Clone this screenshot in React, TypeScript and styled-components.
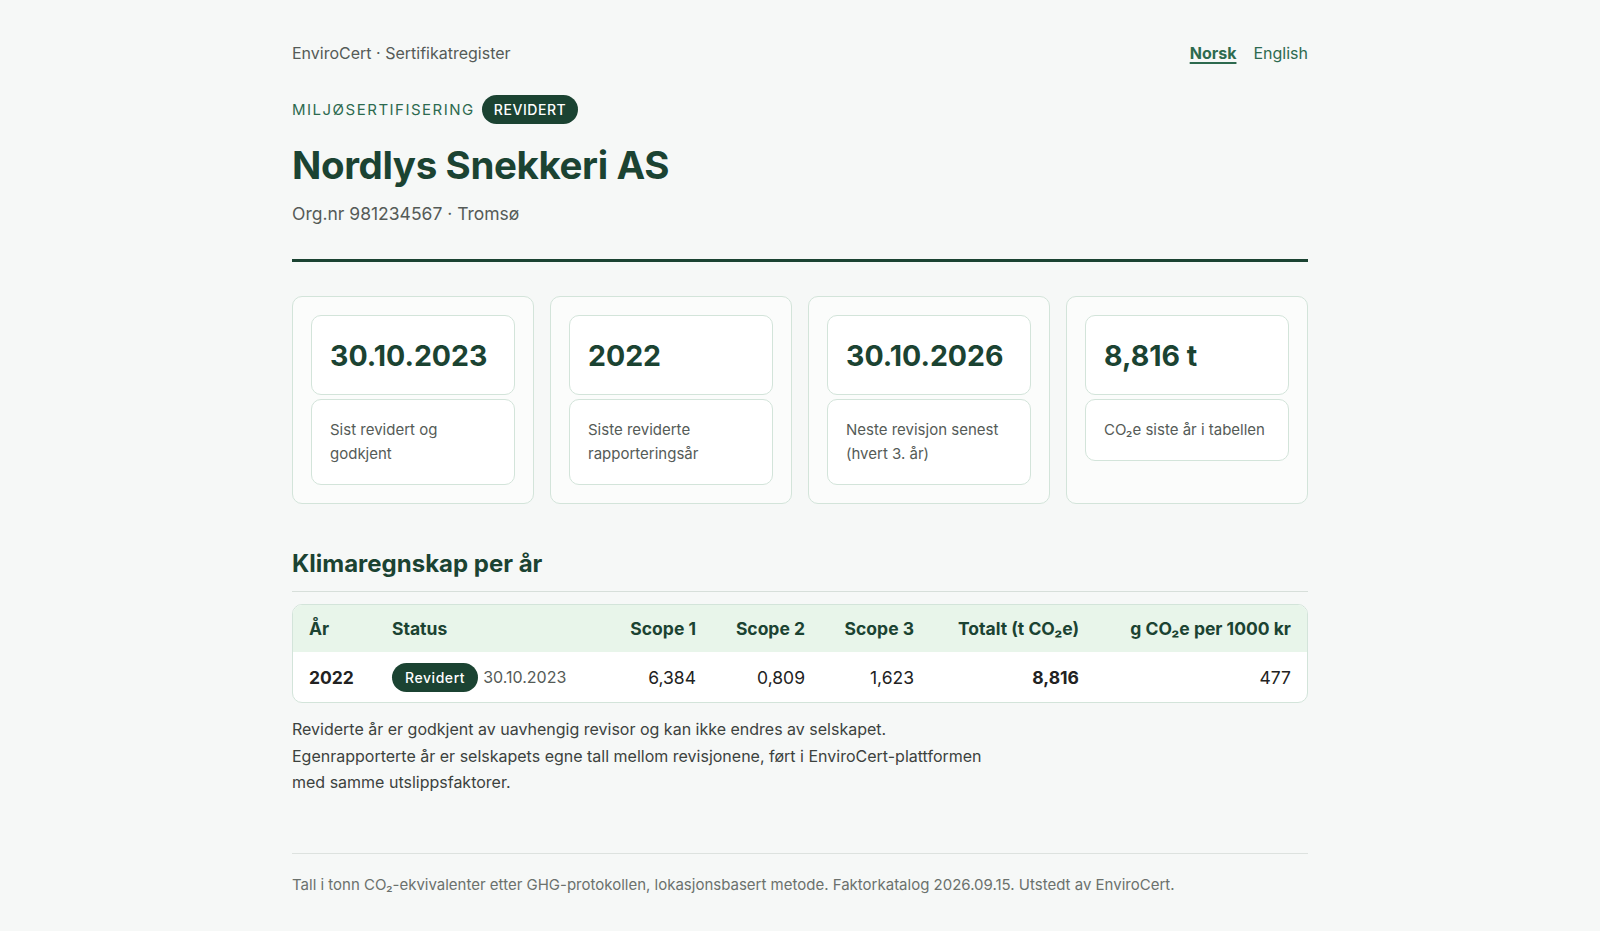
import { createGlobalStyle } from 'styled-components';
import styled from 'styled-components';

const GlobalStyle = createGlobalStyle`
  html, body {
    margin: 0;
    padding: 0;
    background: #f6f8f7;
  }
  body {
    font-family: Inter, "Noto Sans", "Liberation Sans", sans-serif;
    color: #1f2a24;
  }
`;

const Page = styled.div`
  max-width: 1016px;
  margin: 0 auto;
  padding: 40px 0 40px;
`;

const TopBar = styled.div`
  display: flex;
  justify-content: space-between;
  align-items: center;
  height: 26px;
`;

const Brand = styled.span`
  font-size: 16px;
  color: #555b57;
`;

const LangSwitch = styled.div`
  display: flex;
  gap: 17px;
`;

const LangLink = styled.a<{ $active?: boolean }>`
  font-size: 16px;
  color: #2d6a4f;
  font-weight: ${(p) => (p.$active ? 700 : 400)};
  text-decoration: ${(p) => (p.$active ? 'underline' : 'none')};
  text-underline-offset: 3px;
  text-decoration-thickness: 2px;
  cursor: pointer;
`;

const Eyebrow = styled.div`
  display: flex;
  align-items: center;
  gap: 7px;
  margin-top: 29px;
`;

const Kicker = styled.span`
  font-size: 15px;
  letter-spacing: 0.1em;
  color: #2d6a4f;
  text-transform: uppercase;
`;

const Pill = styled.span<{ $small?: boolean }>`
  display: inline-flex;
  align-items: center;
  justify-content: center;
  background: #1b4332;
  color: #fff;
  border-radius: 999px;
  height: 29px;
  padding: 0 ${(p) => (p.$small ? 13 : 12)}px;
  font-size: 14px;
  font-weight: 500;
  letter-spacing: 0.04em;
  text-transform: ${(p) => (p.$small ? 'none' : 'uppercase')};
`;

const Title = styled.h1`
  margin: 16px 0 0;
  font-size: 38.5px;
  line-height: 50px;
  font-weight: 700;
  color: #1b4332;
  letter-spacing: -0.01em;
`;

const Meta = styled.div`
  margin-top: 13px;
  font-size: 17.5px;
  color: #555b57;
`;

const ThickRule = styled.hr`
  margin: 35px 0 0;
  border: none;
  height: 3px;
  background: #1b4332;
`;

const Cards = styled.div`
  display: grid;
  grid-template-columns: repeat(4, 1fr);
  gap: 16px;
  margin-top: 34px;
`;

const Card = styled.div`
  background: #fbfcfb;
  border: 1px solid #d3e4da;
  border-radius: 10px;
  padding: 18px;
  display: flex;
  flex-direction: column;
  gap: 4px;
`;

const ValueBox = styled.div`
  background: #fff;
  border: 1px solid #d3e4da;
  border-radius: 10px;
  height: 80px;
  box-sizing: border-box;
  padding: 0 18px;
  display: flex;
  align-items: center;
  font-size: 28.5px;
  font-weight: 700;
  color: #1b4332;
`;

const LabelBox = styled.div`
  background: #fff;
  border: 1px solid #d3e4da;
  border-radius: 10px;
  padding: 18px;
  font-size: 15px;
  line-height: 24px;
  color: #555b57;
`;

const SectionTitle = styled.h2`
  margin: 45px 0 0;
  font-size: 24px;
  line-height: 30px;
  font-weight: 700;
  color: #1b4332;
  padding-bottom: 12px;
  border-bottom: 1px solid #d7dfda;
`;

const TableWrap = styled.div`
  margin-top: 12px;
  border: 1px solid #d3e4da;
  border-radius: 10px;
  overflow: hidden;
  background: #fff;
`;

const Table = styled.table`
  width: 100%;
  border-collapse: collapse;
  table-layout: fixed;
  font-size: 17.5px;
`;

const Th = styled.th<{ $right?: boolean }>`
  background: #e8f5ea;
  color: #1b4332;
  font-weight: 700;
  text-align: ${(p) => (p.$right ? 'right' : 'left')};
  height: 47px;
  padding: 0 16px;
  white-space: nowrap;
`;

const Td = styled.td<{ $right?: boolean; $bold?: boolean }>`
  text-align: ${(p) => (p.$right ? 'right' : 'left')};
  font-weight: ${(p) => (p.$bold ? 700 : 400)};
  height: 50px;
  padding: 0 16px;
  color: #222;
  white-space: nowrap;
`;

const StatusCell = styled.span`
  display: inline-flex;
  align-items: center;
  gap: 5px;
`;

const DateText = styled.span`
  font-size: 16px;
  color: #555b57;
`;

const Note = styled.p`
  margin: 13px 0 0;
  max-width: 700px;
  font-size: 16px;
  line-height: 26.5px;
  color: #3c423e;
`;

const Footer = styled.footer`
  margin-top: 57px;
  border-top: 1px solid #dde2df;
  padding-top: 21px;
  font-size: 15px;
  color: #6b716d;
`;

const cards = [
  { value: '30.10.2023', label: 'Sist revidert og godkjent' },
  { value: '2022', label: 'Siste reviderte rapporteringsår' },
  { value: '30.10.2026', label: 'Neste revisjon senest (hvert 3. år)' },
  { value: '8,816 t', label: 'CO₂e siste år i tabellen' },
];

const columnWidths = [83, 227, 109, 109, 109, 165, 212];

export default function App() {
  return (
    <>
      <GlobalStyle />
      <Page>
        <TopBar>
          <Brand>EnviroCert · Sertifikatregister</Brand>
          <LangSwitch>
            <LangLink $active>Norsk</LangLink>
            <LangLink>English</LangLink>
          </LangSwitch>
        </TopBar>

        <Eyebrow>
          <Kicker>Miljøsertifisering</Kicker>
          <Pill>Revidert</Pill>
        </Eyebrow>
        <Title>Nordlys Snekkeri AS</Title>
        <Meta>Org.nr 981234567 · Tromsø</Meta>
        <ThickRule />

        <Cards>
          {cards.map((c) => (
            <Card key={c.value}>
              <ValueBox>{c.value}</ValueBox>
              <LabelBox>{c.label}</LabelBox>
            </Card>
          ))}
        </Cards>

        <SectionTitle>Klimaregnskap per år</SectionTitle>
        <TableWrap>
          <Table>
            <colgroup>
              {columnWidths.map((w, i) => (
                <col key={i} style={{ width: w }} />
              ))}
            </colgroup>
            <thead>
              <tr>
                <Th>År</Th>
                <Th>Status</Th>
                <Th $right>Scope 1</Th>
                <Th $right>Scope 2</Th>
                <Th $right>Scope 3</Th>
                <Th $right>Totalt (t CO₂e)</Th>
                <Th $right>g CO₂e per 1000 kr</Th>
              </tr>
            </thead>
            <tbody>
              <tr>
                <Td $bold>2022</Td>
                <Td>
                  <StatusCell>
                    <Pill $small>Revidert</Pill>
                    <DateText>30.10.2023</DateText>
                  </StatusCell>
                </Td>
                <Td $right>6,384</Td>
                <Td $right>0,809</Td>
                <Td $right>1,623</Td>
                <Td $right $bold>8,816</Td>
                <Td $right>477</Td>
              </tr>
            </tbody>
          </Table>
        </TableWrap>

        <Note>
          Reviderte år er godkjent av uavhengig revisor og kan ikke endres av selskapet.
          Egenrapporterte år er selskapets egne tall mellom revisjonene, ført i
          EnviroCert-plattformen med samme utslippsfaktorer.
        </Note>

        <Footer>
          Tall i tonn CO₂-ekvivalenter etter GHG-protokollen, lokasjonsbasert metode.
          Faktorkatalog 2026.09.15. Utstedt av EnviroCert.
        </Footer>
      </Page>
    </>
  );
}
